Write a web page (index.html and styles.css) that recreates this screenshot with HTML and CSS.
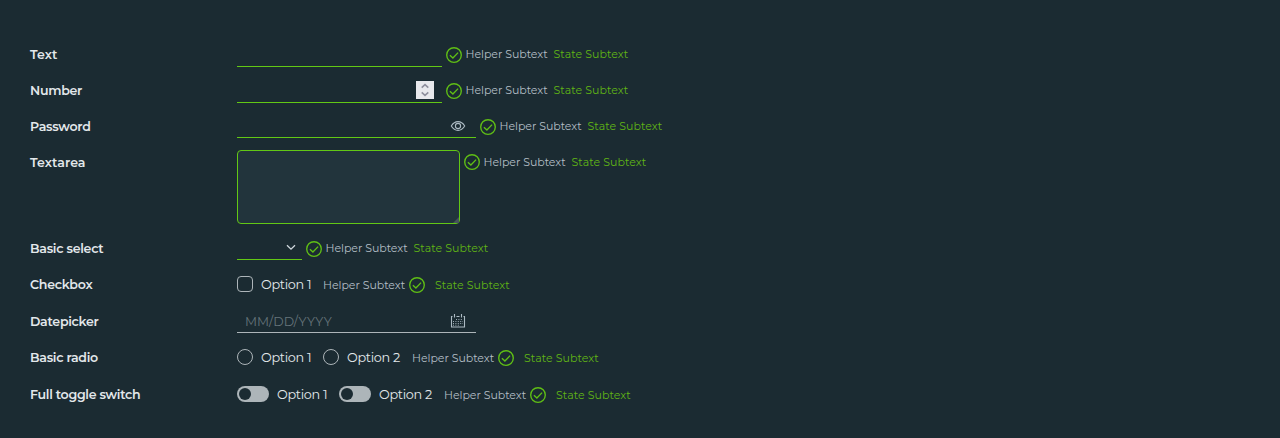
FILE: index.html
```html
<!DOCTYPE html>
<html lang="en">
<head>
<meta charset="utf-8">
<title>Form controls</title>
<link rel="stylesheet" href="styles.css">
</head>
<body>
<svg class="defs" aria-hidden="true">
  <symbol id="check" viewBox="0 0 16 16"><circle cx="8" cy="8" r="7.3"/><path d="M3.900 8.200l3 2.800 5.200-5.400"/></symbol>
</svg>
<form class="form">
  <div class="row">
    <label class="label loose">Text</label>
    <div class="controls"><div class="field text"></div><svg class="check"><use href="#check"/></svg><span class="helper">Helper Subtext</span><span class="state">State Subtext</span></div>
  </div>
  <div class="row">
    <label class="label">Number</label>
    <div class="controls"><div class="field text number"><span class="spinner"><svg width="18" height="18" viewBox="0 0 18 18"><path d="M5.7 6.7L9 3.7l3.3 3M5.7 11.3l3.3 3 3.3-3"/></svg></span></div><svg class="check"><use href="#check"/></svg><span class="helper">Helper Subtext</span><span class="state">State Subtext</span></div>
  </div>
  <div class="row">
    <label class="label">Password</label>
    <div class="controls"><div class="field wide password"><svg class="tool" viewBox="0 0 16 16"><path d="M1.300 8C3 5.200 5.200 3.600 8 3.600S13 5.200 14.700 8C13 10.800 10.800 12.400 8 12.400S3 10.800 1.300 8z"/><circle cx="8" cy="8" r="2.600"/></svg></div><svg class="check"><use href="#check"/></svg><span class="helper">Helper Subtext</span><span class="state">State Subtext</span></div>
  </div>
  <div class="row area-row">
    <label class="label loose">Textarea</label>
    <div class="controls raised"><div class="area"><svg width="6" height="6" viewBox="0 0 6 6"><path d="M6 0v6H0z"/></svg></div><svg class="check"><use href="#check"/></svg><span class="helper">Helper Subtext</span><span class="state">State Subtext</span></div>
  </div>
  <div class="row">
    <label class="label">Basic select</label>
    <div class="controls"><div class="field select"><svg width="10" height="7" viewBox="0 0 10 7"><path d="M1 1.200l4 4 4-4"/></svg></div><svg class="check"><use href="#check"/></svg><span class="helper">Helper Subtext</span><span class="state">State Subtext</span></div>
  </div>
  <div class="row tall">
    <label class="label">Checkbox</label>
    <div class="controls group"><span class="box"></span><span class="option">Option 1</span><span class="helper">Helper Subtext</span><svg class="check"><use href="#check"/></svg><span class="state">State Subtext</span></div>
  </div>
  <div class="row">
    <label class="label">Datepicker</label>
    <div class="controls"><div class="field wide date"><span class="placeholder">MM/DD/YYYY</span><svg class="tool calendar" viewBox="0 0 16 16"><path d="M2.500 3.500h-1v10.500h13V3.500h-1M6.500 3.500h3M4.500 1v3.500M11.500 1v3.500"/><path class="dates" d="M6 6.500h7M3 8.500h10M3 10.500h10M3 12.200h7"/></svg></div></div>
  </div>
  <div class="row tall">
    <label class="label">Basic radio</label>
    <div class="controls group"><span class="box radio"></span><span class="option">Option 1</span><span class="box radio"></span><span class="option second">Option 2</span><span class="helper">Helper Subtext</span><svg class="check"><use href="#check"/></svg><span class="state">State Subtext</span></div>
  </div>
  <div class="row">
    <label class="label">Full toggle switch</label>
    <div class="controls group"><span class="toggle"></span><span class="option">Option 1</span><span class="toggle"></span><span class="option second">Option 2</span><span class="helper">Helper Subtext</span><svg class="check"><use href="#check"/></svg><span class="state">State Subtext</span></div>
  </div>
</form>
</body>
</html>
```
FILE: styles.css
```css
* { box-sizing: border-box; }
html, body { height: 100%; }
body { margin: 0; overflow: hidden; background: #1b2b32; font-family: Metropolis, Montserrat, Inter, sans-serif; color: #e3e8eb; }
.defs { display: none; }
svg { display: block; flex: none; fill: none; }
.form { height: 435px; padding: 36px 30px 0; }
.row { display: flex; height: 36px; }
.tall { height: 37px; }
.area-row { height: 86px; }
.label { width: 207px; font-size: 12.6px; font-weight: 600; line-height: 37px; letter-spacing: -.28px; }
.loose { letter-spacing: .08px; }
.controls { display: flex; height: 36px; align-items: center; white-space: nowrap; }
.field { display: flex; height: 24px; border-bottom: 1px solid #62c815; align-items: center; margin-top: 1px; }
.text { width: 205px; }
.number { justify-content: flex-end; padding-right: 8px; }
.spinner { width: 18px; height: 18px; margin-top: -1px; background: #e9e9ed; }
.spinner path { stroke: #8f8f9d; stroke-width: 1.6; }
.wide { width: 239px; }
.password { justify-content: flex-end; padding-right: 10px; margin-top: 0; }
.tool { width: 16px; height: 16px; stroke: #adbbc4; stroke-width: 1.1; }
.area { display: flex; justify-content: flex-end; align-items: flex-end; align-self: flex-start; margin-top: 6px; width: 223px; height: 74px; border: 1px solid #62c815; border-radius: 4px; background: #22343c; }
.area path { fill: #46545b; }
.select { width: 65px; justify-content: flex-end; padding-right: 6px; margin-top: 0; }
.select path { stroke: #d0d9de; stroke-width: 1.3; }
.check { width: 16px; height: 16px; margin: 1px 3.500px 0 4px; stroke: #60bf15; stroke-width: 1.35; overflow: visible; }
.raised .check { margin-top: 0; }
.helper, .state { font-size: 11px; line-height: 18px; }
.helper { width: 82px; color: #b3bec5; letter-spacing: -.04px; }
.state { margin-left: 6px; color: #60b515; letter-spacing: .06px; }
.group .helper, .group .state { padding-top: 2px; }
.group .state { margin-left: 6.500px; }
.box { width: 16px; height: 16px; border: 1px solid #adb5b9; border-radius: 4px; }
.radio { border-radius: 50%; }
.option { width: 50px; margin: 0 12px 0 8px; font-size: 12.8px; letter-spacing: -.3px; color: #e3e8eb; }
.second { width: 53px; }
.date { justify-content: space-between; padding: 0 10px 0 8px; border-color: #adb5b9; margin-top: 0; }
.placeholder { padding-top: 1.500px; color: #66747a; font-size: 12.6px; }
.dates { stroke-dasharray: 1 1.4; stroke-width: .9; }
.toggle { width: 32px; height: 16px; padding: 2px; border-radius: 8px; background: #adb5b9; }
.toggle::before { content: ""; display: block; width: 12px; height: 12px; border-radius: 50%; background: #1b2b32; }
```
